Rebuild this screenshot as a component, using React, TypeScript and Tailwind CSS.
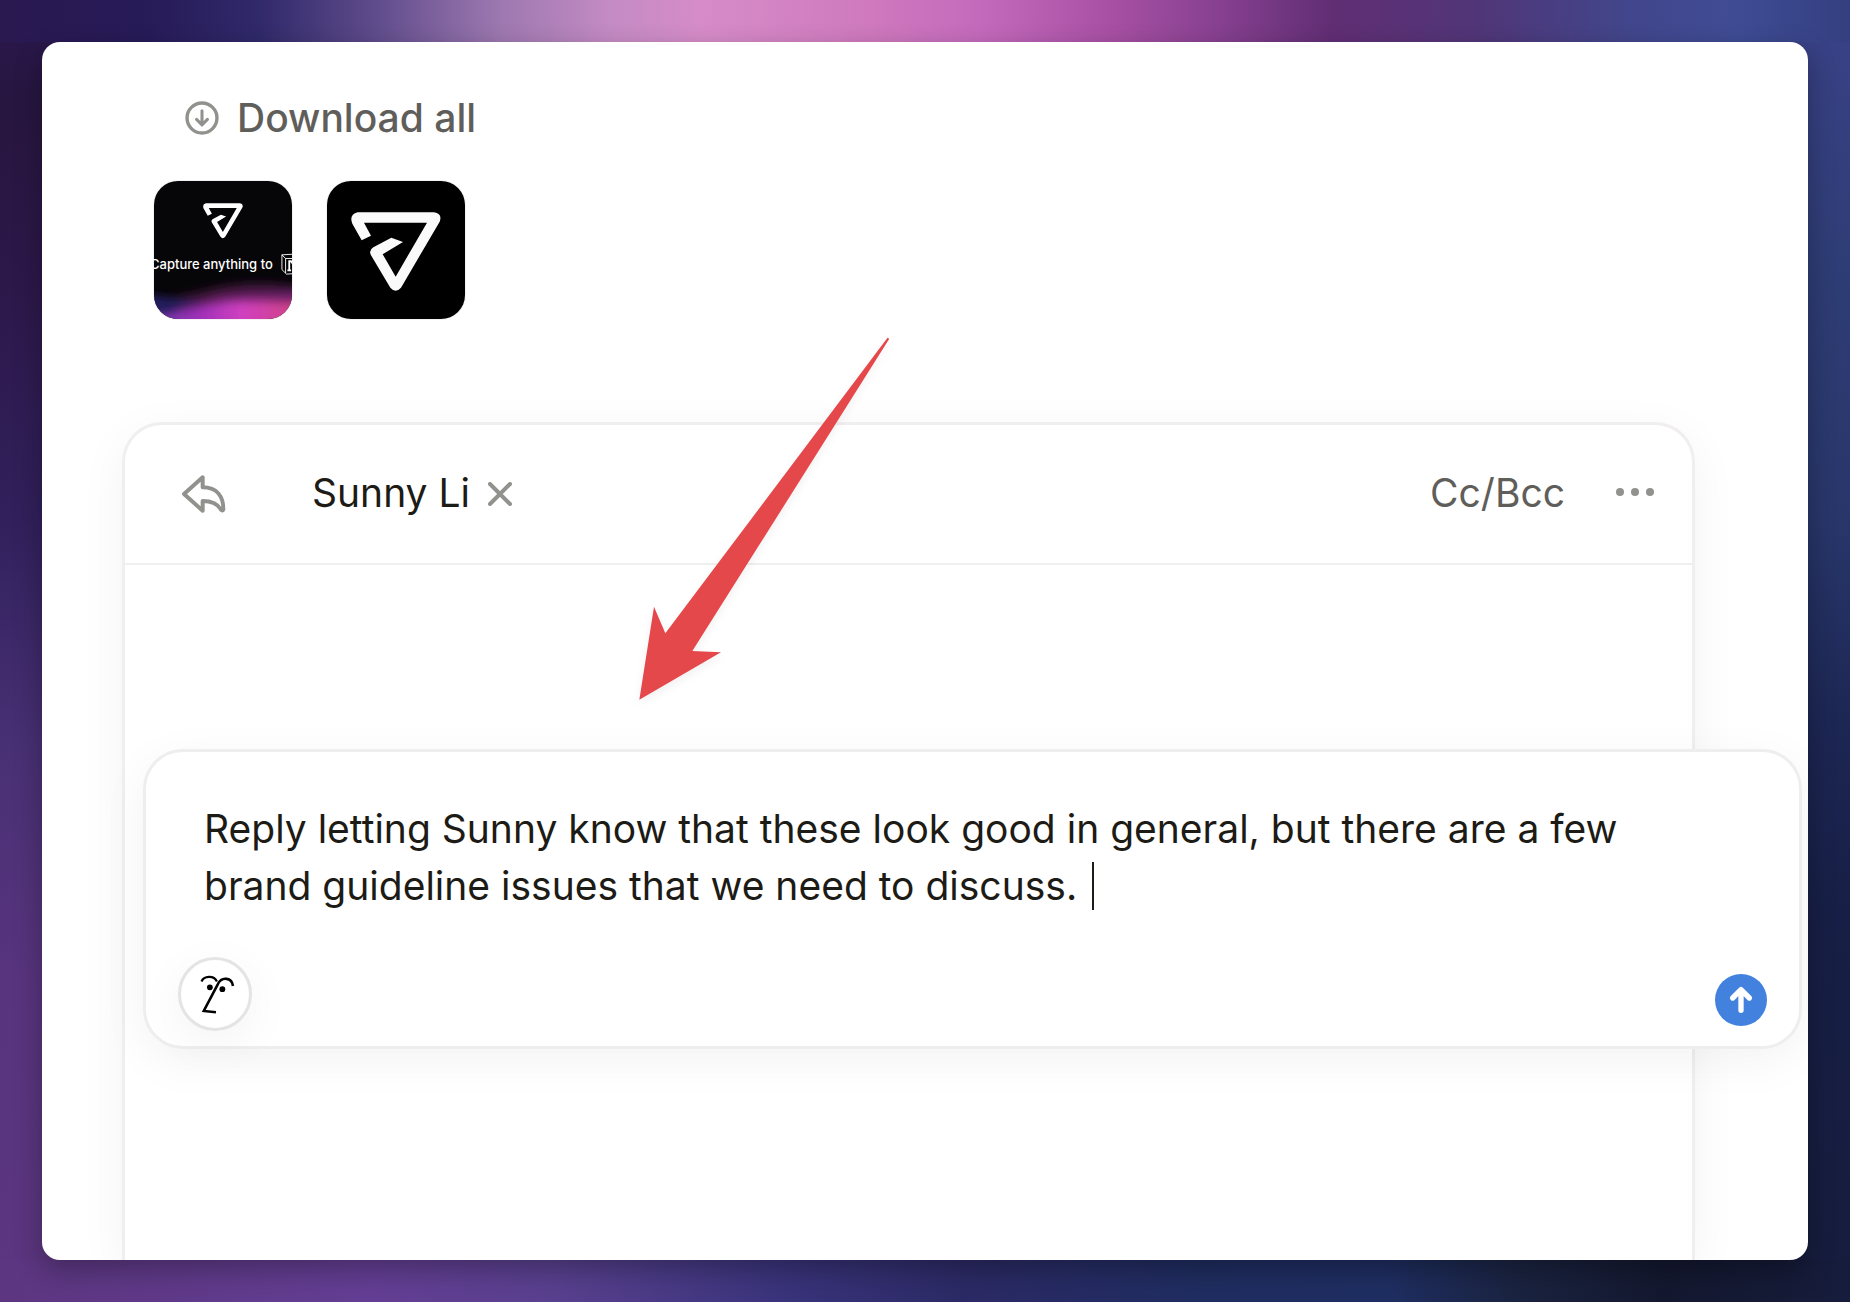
import React, { useState } from 'react';

const DRAFT =
  'Reply letting Sunny know that these look good in general, but there are a few brand guideline issues that we need to discuss. ';

function LogoMark({ className }: { className: string }) {
  return (
    <svg viewBox="73 94 270 240" className={className} fill="currentColor" aria-hidden="true">
      <path d="M105 179 L77 129 Q66 102 93 95 L322 95 Q348 99 339 123 L223 321 Q207 339 191 321 L133 224 Q125 209 140 200 L194 171 L229 184 L168 221 L207 288 L301 126 L112 126 L133 165 Z" />
    </svg>
  );
}

function DownloadIcon() {
  return (
    <svg viewBox="0 0 100 100" className="size-[34px] text-[#91918e]" fill="none" stroke="currentColor" strokeLinecap="round" strokeLinejoin="round" aria-hidden="true">
      <circle cx="50" cy="50" r="44" strokeWidth="10" />
      <path d="M50 29 V69 M34 54 L50 70 L66 54" strokeWidth="9" />
    </svg>
  );
}

function ReplyIcon() {
  return (
    <svg viewBox="181 164 135 114" className="h-[38px] w-[45px] text-[#91918e]" fill="none" stroke="currentColor" strokeWidth="12" strokeLinecap="round" strokeLinejoin="round" aria-hidden="true">
      <path d="M190 221 L246 171 V201 C289 201 308 228 308 267 Q306 273 301 268 C291 250 274 242 246 242 V271 Z" />
    </svg>
  );
}

function FaceIcon() {
  return (
    <svg viewBox="119 655 212 212" className="size-full" fill="none" stroke="#000" strokeWidth="7" aria-hidden="true">
      <path d="M183 722 C190 704 222 702 231 722" />
      <path d="M281 736 C278 710 246 705 234 730 L190 814 L228 818" strokeWidth="8" />
      <circle cx="209" cy="740" r="9" fill="#000" stroke="none" />
      <circle cx="248" cy="746" r="9" fill="#000" stroke="none" />
    </svg>
  );
}

function Attachments() {
  return (
    <div className="flex gap-[35px] pl-28">
      <a href="#banner" aria-label="Banner image" className="relative size-[138px] overflow-hidden rounded-3xl bg-[#060508] text-white ring-1 ring-black/5">
        {/* aurora glow along the bottom edge */}
        <svg viewBox="0 0 138 60" preserveAspectRatio="none" className="absolute inset-x-0 bottom-0 h-[60px] w-full" aria-hidden="true">
          <defs>
            <linearGradient id="glow" x1="0" x2="1" y1="0" y2="0">
              <stop offset="0.1" stopColor="#6a3cac" />
              <stop offset="0.35" stopColor="#9c30b8" />
              <stop offset="0.6" stopColor="#d040c0" />
              <stop offset="0.9" stopColor="#d04484" />
            </linearGradient>
            <filter id="soft" x="-20%" y="-60%" width="140%" height="220%">
              <feGaussianBlur stdDeviation="4" />
            </filter>
          </defs>
          <g filter="url(#soft)">
            <path d="M-20 38 C20 46 50 26 90 24 S140 28 160 28 V90 H-20 Z" fill="#461640" opacity="0.8" />
            <path d="M-20 34 C10 36 24 42 50 42 V90 H-20 Z" fill="#241e5c" />
            <path d="M20 52 C46 42 60 36 88 34 S140 34 160 32 V90 H20 Z" fill="#7a2478" opacity="0.8" />
            <path d="M-20 56 C20 60 50 44 84 43 S140 46 160 40 V90 H-20 Z" fill="url(#glow)" />
          </g>
        </svg>
        <div className="relative flex flex-col items-center pt-[22px]">
          <LogoMark className="h-9 w-10" />
          <div className="mt-[13px] -ml-1 flex items-center gap-2 self-start">
            <span className="text-[13px] leading-6 font-medium whitespace-nowrap">Capture anything to</span>
            <svg viewBox="0 0 24 24" className="size-[22px] shrink-0" fill="none" stroke="currentColor" strokeWidth="2" aria-hidden="true">
              <path d="M1 2 L19 1 L23 5 V22 L6 23 L1 18 Z M1 2 L5 6 H23 M5 6 V22" strokeWidth="1" />
              <path d="M8 9 H11 L17 18 V9 M9 9 V19 M7 19 H11 M15 9 H19" />
            </svg>
          </div>
        </div>
      </a>
      <a href="#logo" aria-label="Logo image" className="flex size-[138px] items-center justify-center rounded-3xl bg-black pt-1 text-[#fafafa] ring-1 ring-black/5">
        <LogoMark className="h-20 w-[90px]" />
      </a>
    </div>
  );
}

function Composer() {
  const [text, setText] = useState(DRAFT);

  return (
    <form
      onSubmit={(e) => e.preventDefault()}
      className="relative mt-[184px] -mr-[110px] ml-[18px] rounded-[40px] border-[3px] border-[#eeeeee] bg-white pt-12 pr-8 pb-[15px] pl-8 shadow-[0_12px_48px_rgba(0,0,0,0.05)]"
    >
      <div className="relative pr-24 pl-[26px]">
        <textarea
          aria-label="Message prompt"
          rows={2}
          value={text}
          onChange={(e) => setText(e.target.value)}
          className="block w-full resize-none overflow-hidden bg-transparent text-[39px] leading-[57px] text-[#1d1b16] caret-transparent outline-none"
        />
        <span className="absolute top-[62px] left-[914px] h-12 w-[2px] bg-[#1d1b16]" />
      </div>
      <div className="mt-[43px] flex items-end justify-between">
        <button type="button" aria-label="Assistant" className="size-[74px] rounded-full border-[3px] border-[#e4e4e4] bg-white shadow-[0_12px_48px_rgba(0,0,0,0.05)]">
          <FaceIcon />
        </button>
        <button type="submit" aria-label="Send" className="mb-[5px] size-[52px] rounded-full bg-[#4282de] text-white">
          <svg viewBox="465 702 156 156" className="size-full" fill="none" stroke="currentColor" strokeWidth="16" strokeLinecap="round" strokeLinejoin="round" aria-hidden="true">
            <path d="M543 750 V811 M518 774 L543 749 L568 774" />
          </svg>
        </button>
      </div>
    </form>
  );
}

function ReplyPanel() {
  return (
    <section className="mt-[103px] mr-[113px] ml-20 flex-1 rounded-t-[40px] border-[3px] border-b-0 border-[#f0eeef] bg-white shadow-[0_12px_48px_rgba(0,0,0,0.05)]">
      <header className="flex h-[140px] items-center border-b-2 border-[#f0eff0] pr-[38px] pb-1 pl-14">
        <button type="button" aria-label="Reply" className="pt-1">
          <ReplyIcon />
        </button>
        <span className="ml-[86px] text-[39px] leading-[57px] text-[#1d1b16]">Sunny Li</span>
        <button type="button" aria-label="Remove Sunny Li" className="ml-[18px] pt-1 text-[#91918e]">
          <svg viewBox="0 0 24 24" className="size-6" fill="none" stroke="currentColor" strokeWidth="4" strokeLinecap="round" aria-hidden="true">
            <path d="M2 2 L22 22 M22 2 L2 22" />
          </svg>
        </button>
        <button type="button" className="ml-auto text-[39px] leading-[57px] text-[#5f5e5a]">
          Cc/Bcc
        </button>
        <button type="button" aria-label="More" className="ml-[51px] text-[#91918e]">
          <svg viewBox="0 0 38 8" className="h-2 w-[38px]" fill="currentColor" aria-hidden="true">
            <circle cx="4" cy="4" r="4" />
            <circle cx="19" cy="4" r="4" />
            <circle cx="34" cy="4" r="4" />
          </svg>
        </button>
      </header>
      <Composer />
    </section>
  );
}

export default function App() {
  return (
    <div className="flex min-h-screen flex-col p-[42px] font-['Inter',sans-serif] [background:linear-gradient(to_right,#2a1850,#271b58_8%,#30296a_14%,#5d4a8a_20%,#9d78b0_27%,#c48bc4_33%,#d68cc8_38%,#cf79be_47%,#c46abc_53%,#a850a4_60%,#86408f_66%,#612e74_72%,#503678_80%,#42468c_88%,#3f4c94_94%,#343f80)_top/100%_42px_no-repeat,linear-gradient(to_right,#5c3680,#643e94_20%,#59408f_30%,#3a347c_42%,#2c2a66_52%,#1f2d60_65%,#1f2e62_75%,#1a2340_82%,#14182f_90%,#161c3c)_bottom/100%_42px_no-repeat,linear-gradient(to_bottom,#2a1850,#27163f_8%,#2d184a_22%,#31205c_40%,#483074_57%,#58347e_75%,#5c3680)_left/50%_100%_no-repeat,linear-gradient(to_bottom,#3a4288,#2f3d76_20%,#28366a_40%,#1d2754_55%,#171f46_70%,#161c3c)_right/50%_100%_no-repeat]">
      <main className="relative flex flex-1 flex-col overflow-hidden rounded-[18px] bg-white pt-[47px] shadow-[0_10px_28px_rgba(0,0,0,0.3)]">
        <button type="button" className="ml-[143px] flex items-center gap-[18px] self-start text-[39px] leading-[57px] font-medium text-[#5f5e5a]">
          <DownloadIcon />
          Download all
        </button>
        <div className="mt-[35px]">
          <Attachments />
        </div>
        <ReplyPanel />

        {/* Callout arrow */}
        <svg viewBox="57 51 756 1089" className="pointer-events-none absolute top-[295px] left-[597px] h-[363px] w-[252px] overflow-visible drop-shadow-[0_4px_4px_rgba(0,0,0,0.06)]" fill="#e5484b" aria-hidden="true">
          <path d="M802 54 Q806 52 807 58 L217 993 L303 997 L58 1139 L102 860 L136 940 Z" />
        </svg>
      </main>
    </div>
  );
}
